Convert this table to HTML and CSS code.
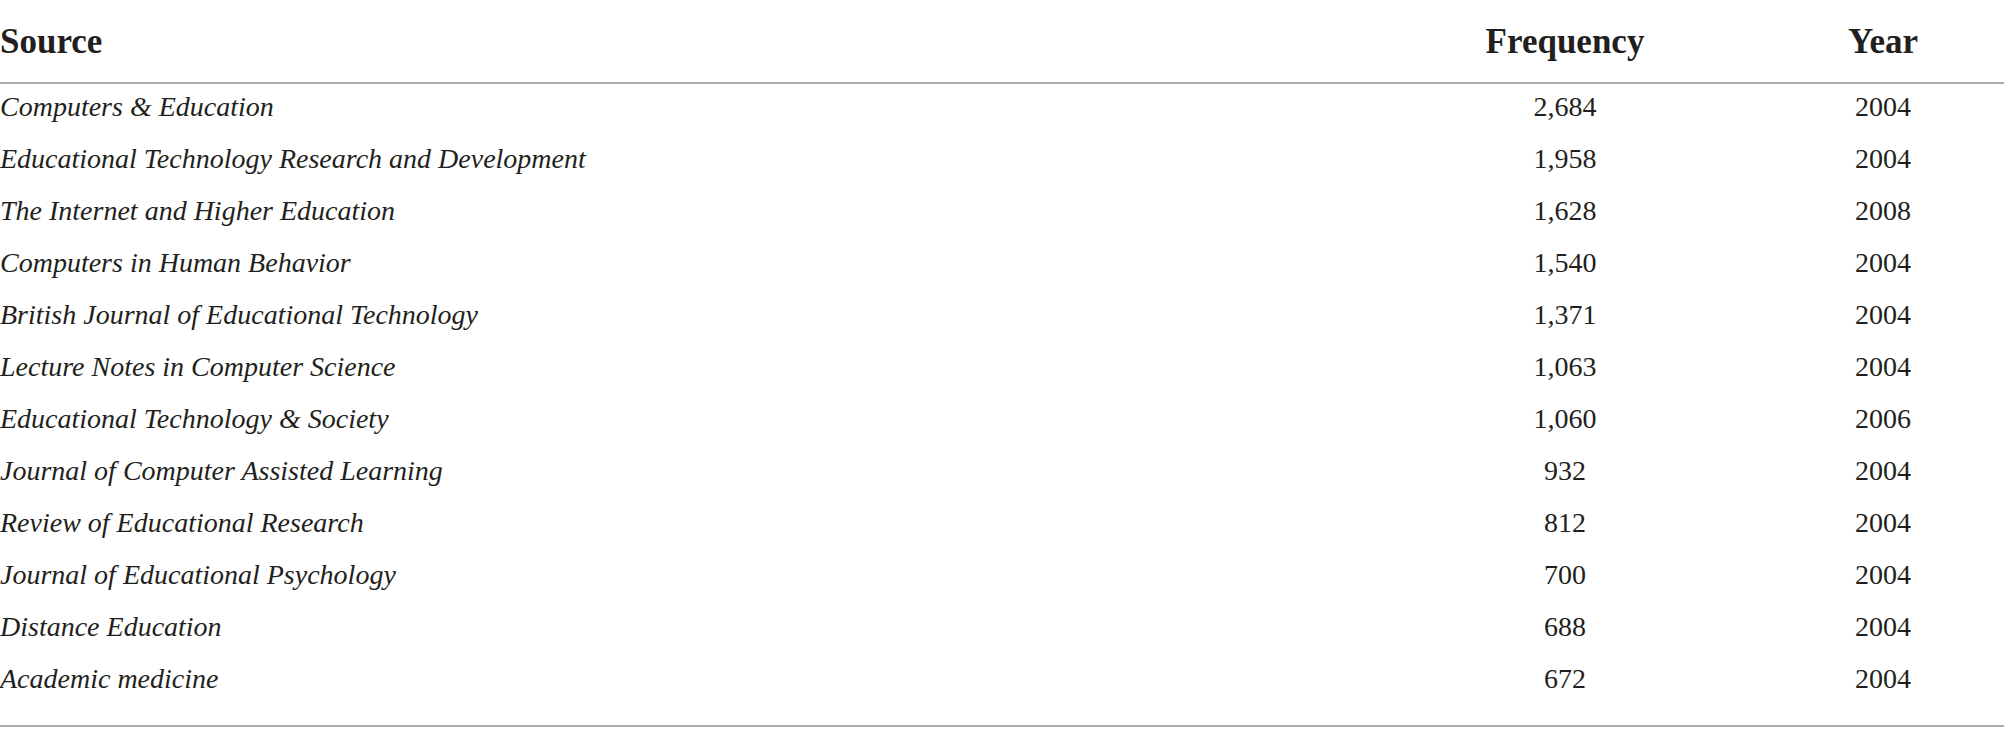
FILE: index.html
```html
<!DOCTYPE html>
<html>
<head>
  <title>Sources</title>
  <meta http-equiv="Content-Type" content="text/html; charset=UTF-8" />
  <link rel="stylesheet" href="styles.css">
</head>
<body>
  <table class="sources">
    <thead>
      <tr>
        <th class="col-source">Source</th>
        <th class="col-freq">Frequency</th>
        <th class="col-year">Year</th>
      </tr>
    </thead>
    <tbody>
      <tr><td class="name">Computers &amp; Education</td><td>2,684</td><td>2004</td></tr>
      <tr><td class="name">Educational Technology Research and Development</td><td>1,958</td><td>2004</td></tr>
      <tr><td class="name">The Internet and Higher Education</td><td>1,628</td><td>2008</td></tr>
      <tr><td class="name">Computers in Human Behavior</td><td>1,540</td><td>2004</td></tr>
      <tr><td class="name">British Journal of Educational Technology</td><td>1,371</td><td>2004</td></tr>
      <tr><td class="name">Lecture Notes in Computer Science</td><td>1,063</td><td>2004</td></tr>
      <tr><td class="name">Educational Technology &amp; Society</td><td>1,060</td><td>2006</td></tr>
      <tr><td class="name">Journal of Computer Assisted Learning</td><td>932</td><td>2004</td></tr>
      <tr><td class="name">Review of Educational Research</td><td>812</td><td>2004</td></tr>
      <tr><td class="name">Journal of Educational Psychology</td><td>700</td><td>2004</td></tr>
      <tr><td class="name">Distance Education</td><td>688</td><td>2004</td></tr>
      <tr class="last"><td class="name">Academic medicine</td><td>672</td><td>2004</td></tr>
    </tbody>
  </table>
</body>
</html>
```

FILE: styles.css
```css
body {
  margin: 0;
  background: #fff;
  color: #231f20;
  font-family: "Liberation Serif", "Times New Roman", serif;
}
.sources {
  width: 2004px;
  border-collapse: collapse;
  table-layout: fixed;
  border-bottom: 2px solid #ababab;
}
.sources thead tr {
  border-bottom: 2px solid #ababab;
}
th {
  font-size: 35px;
  font-weight: bold;
  line-height: 80px;
  padding: 2px 0 0 0;
  vertical-align: middle;
  text-align: center;
}
th.col-source {
  width: 1368px;
  text-align: left;
}
th.col-freq {
  width: 394px;
}
td {
  font-size: 28px;
  line-height: 46px;
  padding: 0 0 6px 0;
  text-align: center;
  vertical-align: top;
}
td.name {
  font-style: italic;
  text-align: left;
}
tr.last td {
  padding-bottom: 23px;
}
```
